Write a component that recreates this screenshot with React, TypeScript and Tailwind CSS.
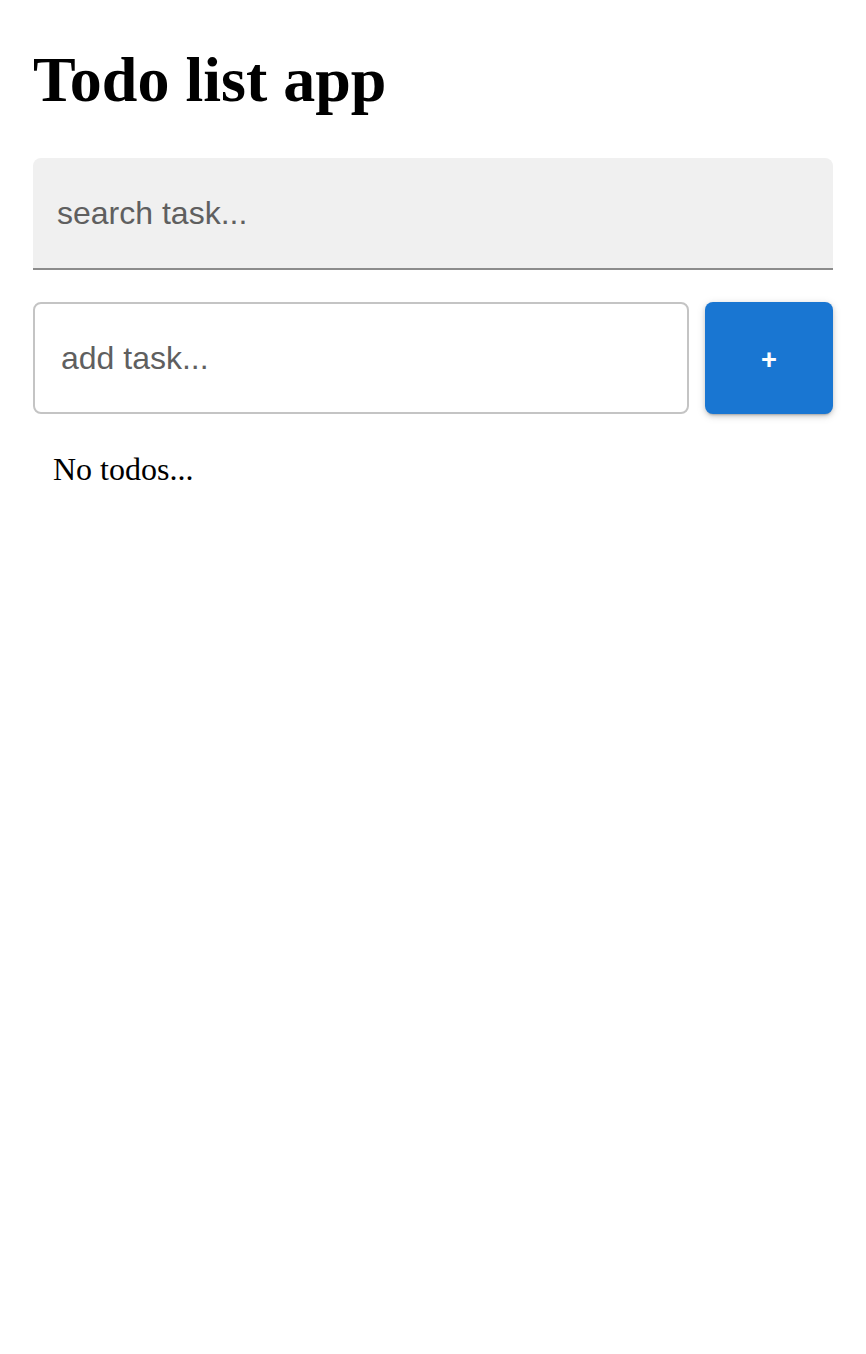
export default function App() {
  return (
    <div className="min-h-[1354px] bg-white px-[33px] pt-[43px]" style={{ fontFamily: '"Liberation Serif", serif' }}>
      <h1 className="text-[64px] font-bold leading-[74px] text-black">Todo list app</h1>
      <div className="mt-[41px] flex h-[112px] items-center rounded-t-[8px] border-b-2 border-[#8c8c8c] bg-[#f0f0f0] px-[24px]">
        <input
          className="w-full bg-transparent text-[32px] text-black outline-none placeholder:text-[#5f5f5f]"
          style={{ fontFamily: '"Liberation Sans", Arial, sans-serif' }}
          placeholder="search task..."
        />
      </div>
      <div className="mt-[32px] flex gap-[16px]">
        <div className="flex h-[112px] flex-1 items-center rounded-[8px] border-2 border-[#c4c4c4] px-[26px]">
          <input
            className="w-full bg-transparent text-[32px] text-black outline-none placeholder:text-[#5f5f5f]"
            style={{ fontFamily: '"Liberation Sans", Arial, sans-serif' }}
            placeholder="add task..."
          />
        </div>
        <button
          className="flex h-[112px] w-[128px] items-center justify-center rounded-[8px] bg-[#1976d2] pt-[4px] text-[28px] font-medium text-white shadow-[0_3px_2px_-2px_rgba(0,0,0,0.2),0_2px_5px_0_rgba(0,0,0,0.14),0_2px_10px_0_rgba(0,0,0,0.12)]"
          style={{ fontFamily: 'Roboto, "Liberation Sans", sans-serif' }}
        >
          +
        </button>
      </div>
      <p className="mt-[35px] pl-[20px] text-[32px] leading-[40px] text-black">No todos...</p>
    </div>
  );
}
